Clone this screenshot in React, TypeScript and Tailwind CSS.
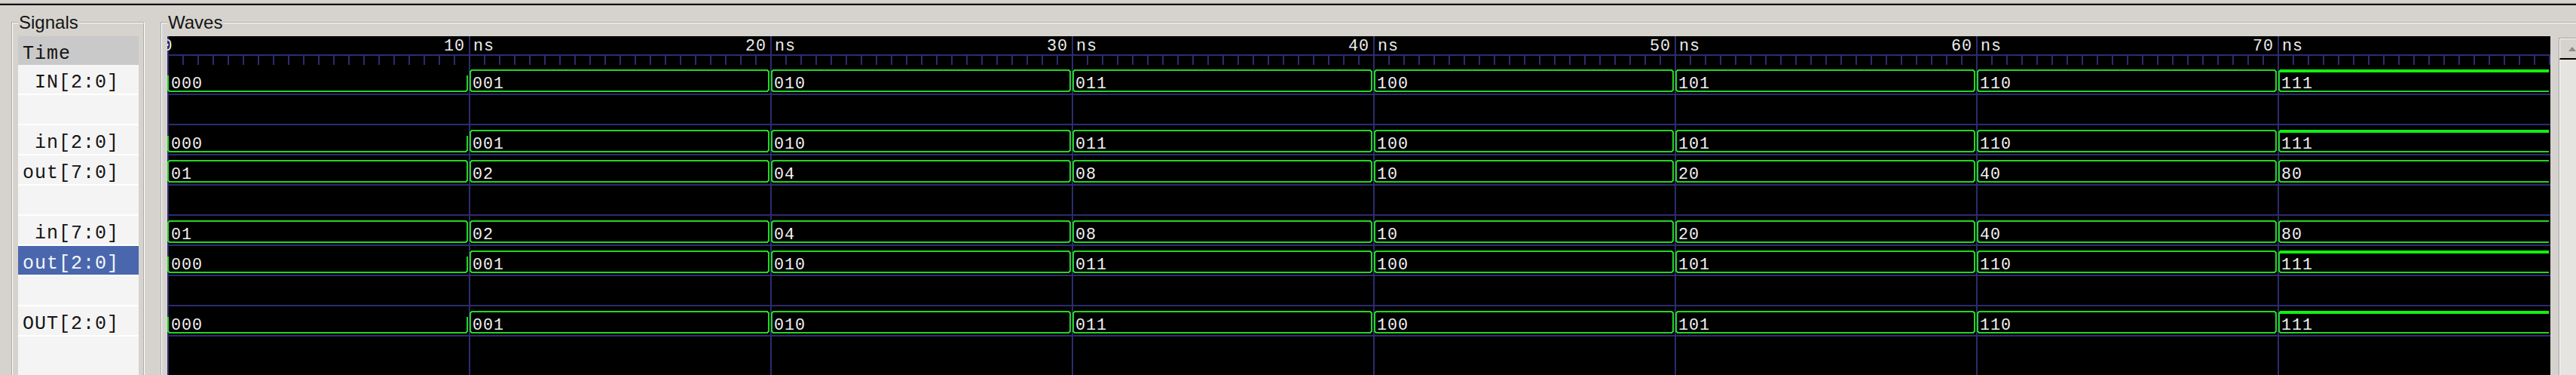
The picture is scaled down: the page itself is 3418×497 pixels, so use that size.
import React from "react";

const W = 3162;
const SEG = 400;
const NAVY = "#2c2c70";
const GREEN = "#24d624";
const GREEN_THICK = "#12f012";

const threeBit = ["000", "001", "010", "011", "100", "101", "110", "111"];
const eightBit = ["01", "02", "04", "08", "10", "20", "40", "80"];

type Row = { name: string; values?: string[]; selected?: boolean };

const rows: Row[] = [
  { name: "IN[2:0]", values: threeBit },
  { name: "" },
  { name: "in[2:0]", values: threeBit },
  { name: "out[7:0]", values: eightBit },
  { name: "" },
  { name: "in[7:0]", values: eightBit },
  { name: "out[2:0]", values: threeBit, selected: true },
  { name: "" },
  { name: "OUT[2:0]", values: threeBit },
];

const MONO = "'Liberation Mono', 'DejaVu Sans Mono', monospace";

function Segment({ v, k, count }: { v: string; k: number; count: number }) {
  const X0 = k * SEG;
  const X1 = (k + 1) * SEG;
  const last = k === count - 1;
  const L = k === 0 ? X0 + 1 : X0 + 2;
  const R = X1 - 2;
  const zero = /^0+$/.test(v);
  const ones = v === "111";
  let d: string;
  if (zero) {
    d = last
      ? `M${L},14 V33 L${L + 2},35 H${W - 2}`
      : `M${L},14 V33 L${L + 2},35 H${R - 2} L${R},33 V14`;
  } else if (last) {
    d = `M${W - 2},7 H${L + 2} L${L},9 V33 L${L + 2},35 H${W - 2}`;
  } else {
    d = `M${L},9 L${L + 2},7 H${R - 2} L${R},9 V33 L${R - 2},35 H${L + 2} L${L},33 Z`;
  }
  return (
    <g>
      <path d={d} fill="none" stroke={GREEN} strokeWidth={2} />
      {ones && (
        <rect
          x={L + 1}
          y={6}
          width={(last ? W - 2 : R - 1) - (L + 1)}
          height={4}
          fill={GREEN_THICK}
        />
      )}
      <text
        x={X0 + 5}
        y={31}
        fill="#f2f2f2"
        fontFamily={MONO}
        fontSize={21.67}
        letterSpacing={1}
      >
        {v}
      </text>
    </g>
  );
}

function Wave({ values }: { values: string[] }) {
  return (
    <svg width={W} height={38} className="block" shapeRendering="crispEdges">
      {values.map((v, k) => (
        <Segment key={k} v={v} k={k} count={values.length} />
      ))}
    </svg>
  );
}

function Ruler() {
  const ticks = [];
  for (let k = 0; k * 20 < W; k++) {
    ticks.push(<rect key={k} x={k * 20} y={26} width={2} height={12} fill={NAVY} />);
  }
  const labels = [];
  for (let k = 1; k < 8; k++) {
    labels.push(
      <g key={k}>
        <text
          x={k * SEG - 5}
          y={19}
          textAnchor="end"
          fill="#ececec"
          fontFamily={MONO}
          fontSize={21.67}
          letterSpacing={1}
        >
          {k * 10}
        </text>
        <text
          x={k * SEG + 6}
          y={19}
          fill="#ececec"
          fontFamily={MONO}
          fontSize={21.67}
          letterSpacing={1}
        >
          ns
        </text>
      </g>
    );
  }
  return (
    <svg width={W} height={38} className="block" shapeRendering="crispEdges">
      <rect x={0} y={24} width={W} height={2} fill={NAVY} />
      {ticks}
      <text x={0} y={19} textAnchor="middle" fill="#ececec" fontFamily={MONO} fontSize={21.67}>
        0
      </text>
      {labels}
    </svg>
  );
}

function Grid() {
  const lines = [];
  for (let k = 0; k * SEG < W; k++) {
    lines.push(<rect key={k} x={k * SEG} y={0} width={2} height={700} fill={NAVY} />);
  }
  return (
    <svg width={W} height={700} className="absolute left-0 top-0" shapeRendering="crispEdges">
      {lines}
    </svg>
  );
}

export default function App() {
  return (
    <div className="w-[3418px] h-[497px] overflow-hidden bg-[#d6d3ce] flex flex-col font-['Liberation_Sans',Arial,sans-serif]">
      <div className="h-[4px] flex-none" />
      <div className="h-[1px] flex-none bg-[#a0a0a0]" />
      <div className="h-[2px] flex-none bg-[#101010]" />
      <div className="flex flex-none items-start gap-[21px] pl-[15px] pt-[9px]">
        {/* Signals group */}
        <fieldset className="flex-none w-[177px] h-[520px] min-w-0 border-2 border-white [border-style:groove] pl-[7px] pr-[6px] pt-[4px]">
          <legend className="px-[1px] text-[24px] leading-[28px] text-[#141414]">Signals</legend>
          <div
            className="w-[160px] h-[480px] bg-[#f4f4f4] flex flex-col text-[25px] tracking-[1px] text-[#141414]"
            style={{ fontFamily: MONO }}
          >
            <div className="h-[38px] flex-none bg-[#c9c9c9] pl-[6px] pt-[10px] leading-[28px]">Time</div>
            {rows.map((r, i) => (
              <div key={i} className="h-[40px] flex-none border-b-2 border-white">
                <div
                  className={
                    r.selected
                      ? "h-[38px] bg-[#4a67ad] text-[#f4f6fb] text-right pr-[26px] pt-[10px] leading-[28px] whitespace-pre"
                      : "h-[38px] text-right pr-[26px] pt-[10px] leading-[28px] whitespace-pre"
                  }
                >
                  {r.name}
                </div>
              </div>
            ))}
          </div>
        </fieldset>

        {/* Waves group */}
        <fieldset className="flex-none w-[3240px] h-[520px] min-w-0 border-2 border-white [border-style:groove] pl-[7px] pt-[4px]">
          <legend className="px-[1px] text-[24px] leading-[28px] text-[#141414]">Waves</legend>
          <div className="flex items-start gap-[11px]">
            <div className="relative w-[3162px] h-[470px] flex-none bg-black overflow-hidden">
              <Grid />
              <div className="relative flex flex-col">
                <div className="h-[38px] flex-none">
                  <Ruler />
                </div>
                {rows.map((r, i) => (
                  <div key={i} className="h-[40px] flex-none border-b-2 border-[#2c2c70]">
                    {r.values ? <Wave values={r.values} /> : null}
                  </div>
                ))}
              </div>
            </div>
            {/* vertical scrollbar */}
            <div className="w-[34px] h-[460px] flex-none mt-[2px] flex flex-col border-l border-t border-[#a0a0a0]">
              <div className="h-[28px] flex-none border-l border-t border-white border-b-2 border-b-black bg-[#d6d3ce] flex items-center justify-center">
                <svg width="10" height="6" className="block">
                  <polygon points="0,6 5,0 10,6" fill="#8c8c8c" />
                </svg>
              </div>
              <div className="flex-1 bg-[#e6e4e0] border-l border-white" />
            </div>
          </div>
        </fieldset>
      </div>
    </div>
  );
}
